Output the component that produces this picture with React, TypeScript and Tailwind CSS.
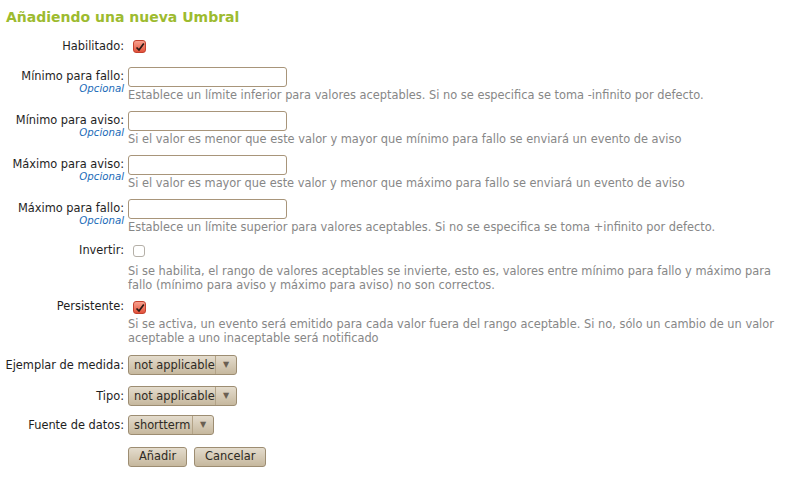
import React from "react"

const font = { fontFamily: '"DejaVu Sans", Verdana, sans-serif' }

function Check({ on }: { on: boolean }) {
  if (!on)
    return <span className="inline-block w-[12px] h-[12px] rounded-[3px] border border-[#b5b0a8] bg-white" />
  return (
    <span className="inline-flex items-center justify-center w-[13px] h-[13px] rounded-[3px] border border-[#c4412e] bg-gradient-to-b from-[#f7a08e] to-[#e2513b]">
      <svg width="10" height="10" viewBox="0 0 10 10">
        <path d="M1.5 5.5 L4 8 L8.8 1.5" fill="none" stroke="#2a1a16" strokeWidth="1.7" />
      </svg>
    </span>
  )
}

function Label({ text, optional }: { text: string; optional?: boolean }) {
  return (
    <div className="w-[120px] shrink-0 text-right whitespace-nowrap text-[11.4px] leading-[13px] text-[#1e1e1e]">
      <div>{text}</div>
      {optional && <div className="italic text-[10.2px] leading-[11px] text-[#1a6bb8]">Opcional</div>}
    </div>
  )
}

function Help({ children }: { children: React.ReactNode }) {
  return <p className="text-[11.4px] leading-[14px] text-[#878787] mt-[1px] pr-[20px]">{children}</p>
}

function NumberRow({ label, help }: { label: string; help: string }) {
  return (
    <div className="flex gap-[4px] mb-[9px]">
      <div className="pt-[3px]">
        <Label text={label} optional />
      </div>
      <div className="flex-1">
        <input className="block w-[159px] h-[20px] rounded-[3px] border border-[#a8957a] bg-white" />
        <Help>{help}</Help>
      </div>
    </div>
  )
}

function Select({ value, w }: { value: string; w: string }) {
  return (
    <div className={`flex h-[20px] rounded-[3px] border border-[#9d8d72] bg-gradient-to-b from-[#e4dccd] to-[#c6b89e] text-[11.4px] text-[#2e2a24] ${w}`}>
      <span className="flex-1 px-[5px] leading-[18px] whitespace-nowrap overflow-hidden">{value}</span>
      <span className="w-[21px] border-l border-[#b3a387] flex items-center justify-center text-[8px] text-[#6a6052]">▼</span>
    </div>
  )
}

function SelectRow({ label, value, w, mb }: { label: string; value: string; w: string; mb: string }) {
  return (
    <div className={`flex items-center gap-[4px] ${mb}`}>
      <Label text={label} />
      <Select value={value} w={w} />
    </div>
  )
}

export default function App() {
  return (
    <div className="w-[803px] h-[500px] bg-white pl-[4px] pt-[8px]" style={font}>
      <h2 className="ml-[2px] text-[14px] font-bold text-[#9dbb2f] leading-[18px] mb-[14px]">Añadiendo una nueva Umbral</h2>

      <div className="flex items-center gap-[4px] mb-[14px]">
        <Label text="Habilitado:" />
        <div className="pl-[5px] flex"><Check on /></div>
      </div>

      <NumberRow label="Mínimo para fallo:" help="Establece un límite inferior para valores aceptables. Si no se especifica se toma -infinito por defecto." />
      <NumberRow label="Mínimo para aviso:" help="Si el valor es menor que este valor y mayor que mínimo para fallo se enviará un evento de aviso" />
      <NumberRow label="Máximo para aviso:" help="Si el valor es mayor que este valor y menor que máximo para fallo se enviará un evento de aviso" />
      <NumberRow label="Máximo para fallo:" help="Establece un límite superior para valores aceptables. Si no se especifica se toma +infinito por defecto." />

      <div className="flex gap-[4px] mb-[7px]">
        <div className="pt-[1px]"><Label text="Invertir:" /></div>
        <div className="flex-1">
          <div className="pl-[5px] flex pt-[2px]"><Check on={false} /></div>
          <Help><span className="block pt-[6px]">Si se habilita, el rango de valores aceptables se invierte, esto es, valores entre mínimo para fallo y máximo para fallo (mínimo para aviso y máximo para aviso) no son correctos.</span></Help>
        </div>
      </div>

      <div className="flex gap-[4px] mb-[10px]">
        <div className="pt-[1px]"><Label text="Persistente:" /></div>
        <div className="flex-1">
          <div className="pl-[5px] flex pt-[2px]"><Check on /></div>
          <Help><span className="block pt-[2px]">Si se activa, un evento será emitido para cada valor fuera del rango aceptable. Si no, sólo un cambio de un valor aceptable a uno inaceptable será notificado</span></Help>
        </div>
      </div>

      <SelectRow label="Ejemplar de medida:" value="not applicable" w="w-[109px]" mb="mb-[11px]" />
      <SelectRow label="Tipo:" value="not applicable" w="w-[109px]" mb="mb-[9px]" />
      <SelectRow label="Fuente de datos:" value="shortterm" w="w-[86px]" mb="mb-[12px]" />

      <div className="flex gap-[7px] pl-[124px]">
        <button className="h-[20px] px-[10px] rounded-[3px] border border-[#9d8d72] bg-gradient-to-b from-[#e4dccd] to-[#c6b89e] text-[11.4px] text-[#2e2a24]">Añadir</button>
        <button className="h-[20px] px-[10px] rounded-[3px] border border-[#9d8d72] bg-gradient-to-b from-[#e4dccd] to-[#c6b89e] text-[11.4px] text-[#2e2a24]">Cancelar</button>
      </div>
    </div>
  )
}
